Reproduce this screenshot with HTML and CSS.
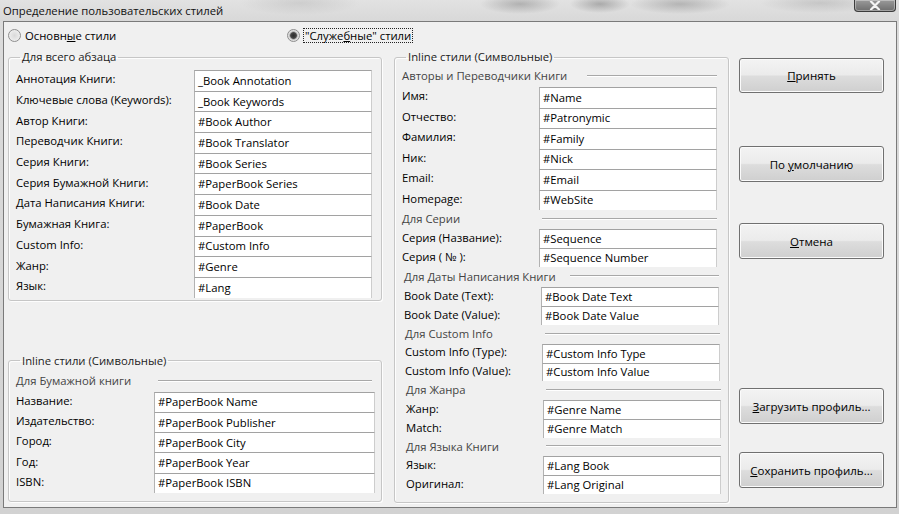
FILE: index.html
```html
<!DOCTYPE html>
<html lang="ru">
<head>
<meta charset="utf-8">
<title>Определение пользовательских стилей</title>
<link rel="stylesheet" href="styles.css">
</head>
<body>
<div class="window">
  <div class="titlebar">
    <span class="title">Определение пользовательских стилей</span>
    <div class="close">
      <svg width="16" height="9" viewBox="0 0 16 9"><path d="M4 0.5 L12 8.5 M12 0.5 L4 8.5" stroke="#f4f4f4" stroke-width="2.2" stroke-linecap="round"/></svg>
    </div>
  </div>
  <div class="client">
    <div class="radios">
      <label class="radio"><span class="rb"></span><span>Основн<u>ы</u>е стили</span></label>
      <label class="radio"><span class="rb on"></span><span class="focus">"Служе<u>б</u>ные" стили</span></label>
    </div>
    <div class="main">
      <div class="leftcol">
        <fieldset class="group g1">
          <legend>Для всего абзаца</legend>
          <div class="row"><span class="lab">Аннотация Книги:</span><span class="field">_Book Annotation</span></div>
          <div class="row"><span class="lab">Ключевые слова (Keywords):</span><span class="field">_Book Keywords</span></div>
          <div class="row"><span class="lab">Автор Книги:</span><span class="field">#Book Author</span></div>
          <div class="row"><span class="lab">Переводчик Книги:</span><span class="field">#Book Translator</span></div>
          <div class="row"><span class="lab">Серия Книги:</span><span class="field">#Book Series</span></div>
          <div class="row"><span class="lab">Серия Бумажной Книги:</span><span class="field">#PaperBook Series</span></div>
          <div class="row"><span class="lab">Дата Написания Книги:</span><span class="field">#Book Date</span></div>
          <div class="row"><span class="lab">Бумажная Книга:</span><span class="field">#PaperBook</span></div>
          <div class="row"><span class="lab">Custom Info:</span><span class="field">#Custom Info</span></div>
          <div class="row"><span class="lab">Жанр:</span><span class="field">#Genre</span></div>
          <div class="row"><span class="lab">Язык:</span><span class="field">#Lang</span></div>
        </fieldset>
        <fieldset class="group g2">
          <legend>Inline стили (Символьные)</legend>
          <div class="hdr"><span class="htext">Для Бумажной книги</span><span class="hline"></span></div>
          <div class="row"><span class="lab">Название:</span><span class="field">#PaperBook Name</span></div>
          <div class="row"><span class="lab">Издательство:</span><span class="field">#PaperBook Publisher</span></div>
          <div class="row"><span class="lab">Город:</span><span class="field">#PaperBook City</span></div>
          <div class="row"><span class="lab">Год:</span><span class="field">#PaperBook Year</span></div>
          <div class="row"><span class="lab">ISBN:</span><span class="field">#PaperBook ISBN</span></div>
        </fieldset>
      </div>
      <fieldset class="group g3">
        <legend>Inline стили (Символьные)</legend>
        <div class="sec">
          <div class="hdr h-authors"><span class="htext">Авторы и Переводчики Книги</span><span class="hline l-authors"></span></div>
          <div class="row r205"><span class="lab">Имя:</span><span class="field">#Name</span></div>
          <div class="row r205"><span class="lab">Отчество:</span><span class="field">#Patronymic</span></div>
          <div class="row r205"><span class="lab">Фамилия:</span><span class="field">#Family</span></div>
          <div class="row r205"><span class="lab">Ник:</span><span class="field">#Nick</span></div>
          <div class="row r205"><span class="lab">Email:</span><span class="field">#Email</span></div>
          <div class="row r205"><span class="lab">Homepage:</span><span class="field">#WebSite</span></div>
        </div>
        <div class="sec">
          <div class="hdr h19"><span class="htext">Для Серии</span><span class="hline"></span></div>
          <div class="row r19"><span class="lab">Серия (Название):</span><span class="field">#Sequence</span></div>
          <div class="row r19"><span class="lab">Серия ( № ):</span><span class="field">#Sequence Number</span></div>
        </div>
        <div class="sec s2">
          <div class="hdr h20"><span class="htext">Для Даты Написания Книги</span><span class="hline l-date"></span></div>
          <div class="row r19"><span class="lab">Book Date (Text):</span><span class="field">#Book Date Text</span></div>
          <div class="row r19"><span class="lab">Book Date (Value):</span><span class="field">#Book Date Value</span></div>
        </div>
        <div class="sec s3">
          <div class="hdr h19"><span class="htext">Для Custom Info</span><span class="hline"></span></div>
          <div class="row r185"><span class="lab">Custom Info (Type):</span><span class="field">#Custom Info Type</span></div>
          <div class="row r185"><span class="lab">Custom Info (Value):</span><span class="field">#Custom Info Value</span></div>
        </div>
        <div class="sec s4">
          <div class="hdr h19"><span class="htext">Для Жанра</span><span class="hline"></span></div>
          <div class="row r19"><span class="lab">Жанр:</span><span class="field">#Genre Name</span></div>
          <div class="row r19"><span class="lab">Match:</span><span class="field">#Genre Match</span></div>
        </div>
        <div class="sec s4">
          <div class="hdr h18"><span class="htext">Для Языка Книги</span><span class="hline"></span></div>
          <div class="row r19"><span class="lab">Язык:</span><span class="field">#Lang Book</span></div>
          <div class="row r19"><span class="lab">Оригинал:</span><span class="field">#Lang Original</span></div>
        </div>
      </fieldset>
      <div class="buttons">
        <div class="btn b-ok"><span><u>П</u>ринять</span></div>
        <div class="btn b-def"><span>По <u>у</u>молчанию</span></div>
        <div class="btn b-cancel"><span><u>О</u>тмена</span></div>
        <div class="btn b-load"><span><u>З</u>агрузить профиль...</span></div>
        <div class="btn b-save"><span><u>С</u>охранить профиль...</span></div>
      </div>
    </div>
  </div>
</div>
</body>
</html>
```

FILE: styles.css
```css
* { box-sizing: border-box; }

html, body {
  margin: 0;
  padding: 0;
}

body {
  width: 899px;
  height: 514px;
  overflow: hidden;
  font-family: "Open Sans", "Noto Sans", sans-serif;
  font-size: 11.3px;
  color: #000;
  background: #d6d6d6;
}

.window {
  width: 899px;
  height: 514px;
  display: flex;
  flex-direction: column;
  background: linear-gradient(#dcdcdc, #d2d2d2);
}

/* ---------- title bar ---------- */
.titlebar {
  height: 21px;
  flex: none;
  display: flex;
  align-items: center;
  padding-left: 3px;
  background:
    radial-gradient(ellipse 40px 10px at 520px 4px, rgba(90,90,90,0.35), rgba(90,90,90,0) 100%),
    radial-gradient(ellipse 30px 9px at 600px 4px, rgba(70,70,70,0.35), rgba(70,70,70,0) 100%),
    radial-gradient(ellipse 50px 10px at 680px 4px, rgba(80,80,80,0.3), rgba(80,80,80,0) 100%),
    radial-gradient(ellipse 60px 10px at 820px 3px, rgba(120,120,120,0.25), rgba(120,120,120,0) 100%),
    radial-gradient(ellipse 60px 12px at 300px 3px, rgba(150,150,150,0.25), rgba(150,150,150,0) 100%),
    linear-gradient(#e2e2e2, #d8d8d8);
}

.title {
  font-size: 11.3px;
  color: #111;
  white-space: nowrap;
}

.close {
  margin-left: auto;
  margin-right: 3px;
  align-self: flex-start;
  width: 42px;
  height: 12px;
  border: 1px solid #3c3c3c;
  border-top: none;
  border-radius: 0 0 4px 4px;
  background: linear-gradient(#9a9a9a, #6e6e6e);
  box-shadow: inset 0 0 0 1px rgba(255,255,255,0.35);
  display: flex;
  align-items: center;
  justify-content: center;
}

/* ---------- client area ---------- */
.client {
  height: 487px;
  flex: none;
  margin: 0 2px 0 3px;
  border: 1px solid #7a7a7a;
  background: #f0f0f0;
}

.radios {
  display: grid;
  grid-template-columns: 279px auto;
  height: 27px;
  align-items: center;
  padding-left: 4px;
}

.radio {
  display: flex;
  align-items: center;
  white-space: nowrap;
}

.rb {
  width: 13px;
  height: 13px;
  border-radius: 50%;
  border: 1px solid #8e8e8e;
  background: radial-gradient(circle at 50% 50%, #d9d9d9 0, #e9e9e9 55%, #f6f6f6 100%);
  margin-right: 4px;
  flex: none;
}

.rb.on {
  background: radial-gradient(circle at 50% 50%, #2e2e2e 0, #3c3c3c 2px, #505050 3px, #9c9c9c 3.6px, #dcdcdc 4.5px, #efefef 100%);
}

.focus {
  border: 1px dotted #222;
  padding: 0 1px;
  line-height: 13px;
  margin-left: -1px;
}

/* ---------- main ---------- */
.main {
  display: flex;
  align-items: flex-start;
  padding-left: 4px;
}

.leftcol {
  width: 374px;
  display: flex;
  flex-direction: column;
}

.group {
  margin: 0;
  min-width: 0;
  border: 1px solid #c6c6c6;
  border-radius: 3px;
  box-shadow: inset 1px 1px 0 #fdfdfd, 1px 1px 0 #fdfdfd;
}

.group legend {
  padding: 0 2px;
  margin-left: 4px;
  height: 16px;
  line-height: 16px;
  color: #1c1c1c;
  white-space: nowrap;
}

.group.g1 {
  padding: 5px 9px 2px 7px;
}

.group.g2 {
  margin-top: 52px;
  padding: 3px 6px 8px 7px;
}

.group.g3 {
  width: 335px;
  margin-left: 12px;
  padding: 1px 10px 8px 7px;
}

.row {
  display: grid;
  align-items: center;
  white-space: nowrap;
}

.g1 .row {
  grid-template-columns: 178px 178px;
  height: 20.7px;
}

.g2 .row {
  grid-template-columns: 138px 221px;
  height: 20.3px;
}

.g3 .row,
.g3 .hdr {
  grid-template-columns: 137px 178px;
}

.g2 .hdr {
  grid-template-columns: 138px 221px;
  height: 20px;
}

.r205 { height: 20.5px; }
.r19 { height: 19px; }
.r185 { height: 18.5px; }

.lab {
  padding-bottom: 3px;
}

.field {
  height: 100%;
  display: flex;
  align-items: center;
  background: #fff;
  border-style: solid;
  border-width: 1px 1px 0 1px;
  border-color: #a2a2a2 #cdcdcd #e6e6e6 #b2b2b2;
  padding: 0 0 1px 3px;
  overflow: hidden;
}

.sec.s2 { padding-left: 2px; }
.sec.s3 { padding-left: 3px; }
.sec.s4 { padding-left: 4px; }

.hdr {
  display: grid;
  align-items: center;
  padding-bottom: 2px;
  white-space: nowrap;
}

.h-authors { height: 21px; }
.h20 { height: 20px; }
.h19 { height: 19px; }
.h18 { height: 18px; }

.htext {
  color: #444;
  overflow: visible;
}

.hline {
  height: 2px;
  border-top: 1px solid #a8a8a8;
  border-bottom: 1px solid #ffffff;
  margin-left: 3px;
}

.g2 .hline {
  margin-left: 4px;
  margin-right: 3px;
}

.hline.l-authors { margin-left: 48px; }
.hline.l-date { margin-left: 29px; }

/* ---------- buttons ---------- */
.buttons {
  width: 145px;
  margin-left: 10px;
  display: flex;
  flex-direction: column;
}

.btn {
  height: 36px;
  border: 1px solid #707070;
  border-radius: 3px;
  background: linear-gradient(#f3f3f3 0%, #ebebeb 48%, #dddddd 52%, #cfcfcf 100%);
  box-shadow: inset 0 0 0 1px #fbfbfb;
  display: flex;
  align-items: center;
  justify-content: center;
  font-size: 11.5px;
  white-space: nowrap;
}

.b-ok { margin-top: 9px; height: 35px; }
.b-def { margin-top: 53px; }
.b-cancel { margin-top: 41px; }
.b-load { margin-top: 129px; }
.b-save { margin-top: 28px; }
```
